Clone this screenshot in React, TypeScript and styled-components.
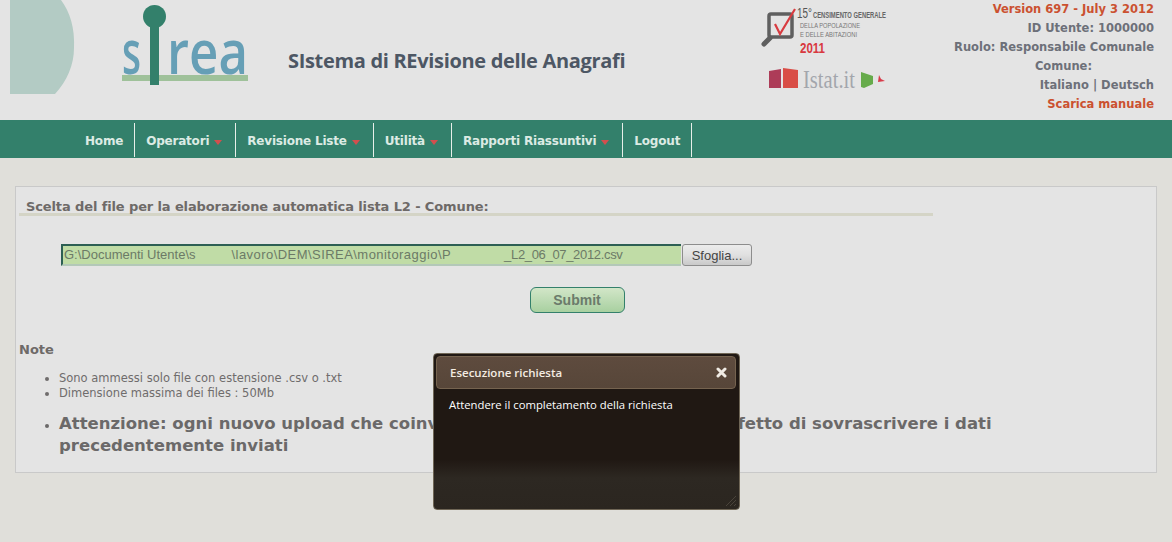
import React from "react"
import styled, { createGlobalStyle } from "styled-components"

const GlobalStyle = createGlobalStyle`
  html, body {
    margin: 0;
    padding: 0;
    background: #e0dfda;
    font-family: "DejaVu Sans", Verdana, sans-serif;
    color: #6b6a6a;
  }
`

const Page = styled.div`
  position: relative;
  width: 1172px;
  height: 542px;
  overflow: hidden;
`

const Header = styled.header`
  display: flex;
  align-items: flex-start;
  height: 120px;
  background: #e4e4e4;
`

const Decor = styled.svg`
  flex: none;
  margin-left: 10px;
`

const Logo = styled.svg`
  flex: none;
  margin-left: 47px;
`

const SiteTitle = styled.h1`
  flex: none;
  width: 337px;
  margin: 47px 0 0 39px;
  font: 700 20px/28px "Open Sans", sans-serif;
  letter-spacing: -0.32px;
  color: #4d5764;
  white-space: nowrap;
`

const Brands = styled.div`
  flex: none;
  display: flex;
  flex-direction: column;
  gap: 12px;
  margin: 6px 0 0 135px;
`

const UserInfo = styled.div`
  margin-left: auto;
  padding: 0 18px 0 0;
  text-align: right;
  font-size: 11.5px;
  font-weight: 700;
  line-height: 19px;
  color: #6d7079;
`

const InfoLine = styled.div<{ $accent?: boolean; $trail?: number }>`
  white-space: nowrap;
  color: ${props => (props.$accent ? "#cb5130" : "inherit")};
  padding-right: ${props => props.$trail || 0}px;
`

const Nav = styled.nav`
  display: flex;
  height: 38px;
  padding: 3px 0 1px 74px;
  box-sizing: border-box;
  background: #33806b;
`

const NavItem = styled.a`
  display: flex;
  align-items: center;
  gap: 5px;
  padding: 2px 11px 0;
  border-right: 1px solid #e8efe9;
  font-size: 12px;
  font-weight: 700;
  letter-spacing: -0.2px;
  color: #dcebe4;
  white-space: nowrap;
`

const Caret = styled.span`
  width: 0;
  height: 0;
  margin: 3px 2px 0 0;
  border-left: 4.5px solid transparent;
  border-right: 4.5px solid transparent;
  border-top: 5px solid #d24f4e;
`

const Panel = styled.main`
  margin: 28px 15px 0;
  height: 287px;
  box-sizing: border-box;
  padding: 9px 3px 0;
  border: 1px solid #c9c9c9;
  background: #e4e4e4;
`

const PanelTitle = styled.h2`
  width: 914px;
  margin: 0;
  padding: 2px 7px 0;
  box-sizing: border-box;
  height: 20px;
  border-bottom: 3px solid #d4d4c6;
  font-size: 13px;
  line-height: 17px;
  font-weight: 700;
  letter-spacing: -0.12px;
  color: #6e6a68;
  white-space: nowrap;
`

const FileRow = styled.div`
  display: flex;
  gap: 1px;
  margin: 28px 0 0 42px;
`

const FileInput = styled.div`
  width: 620px;
  height: 22px;
  box-sizing: border-box;
  padding-left: 1px;
  background: #c0dca6;
  border-top: 2px solid #2d5f54;
  border-left: 2px solid #2d5f54;
  border-bottom: 2px solid #b3c8b8;
  font: 13px/18px "Liberation Sans", Arial, sans-serif;
  color: #6c7a66;
  white-space: pre;
`

const PathPart = styled.span<{ $track?: number }>`
  letter-spacing: ${props => props.$track || 0}px;
`

const Masked = styled.span<{ $w: number }>`
  display: inline-block;
  width: ${props => props.$w}px;
`

const BrowseButton = styled.button`
  width: 70px;
  height: 22px;
  padding: 0;
  border: 1px solid #8d8d8d;
  border-radius: 3px;
  background: linear-gradient(#ececec, #e0e0e0 50%, #c9c9c9);
  font: 13px "Liberation Sans", Arial, sans-serif;
  color: #444;
`

const SubmitRow = styled.div`
  display: flex;
  justify-content: center;
  margin: 21px 0 0 0;
  padding-right: 18px;
`

const SubmitButton = styled.button`
  width: 95px;
  height: 26px;
  padding: 0;
  border: 1px solid #33806b;
  border-radius: 6px;
  background: linear-gradient(#d2e6c8, #a8d0a0);
  font: 700 14px "Liberation Sans", Arial, sans-serif;
  color: #6b7b6b;
`

const NoteTitle = styled.h3`
  margin: 28px 0 0;
  font-size: 13px;
  line-height: 17px;
  font-weight: 700;
  color: #6e6a68;
`

const SmallList = styled.ul`
  margin: 13px 0 0;
  padding: 0 0 0 40px;
  font-size: 11.5px;
  line-height: 15px;
  color: #6f6c6c;
`

const BigList = styled.ul`
  margin: 12px 0 0;
  padding: 0 0 0 40px;
  width: 950px;
  font-size: 16.5px;
  line-height: 22px;
  font-weight: 700;
  color: #6b6969;

  li::marker {
    font-size: 12px;
  }
`

const Modal = styled.section`
  position: absolute;
  left: 433px;
  top: 353px;
  width: 307px;
  height: 157px;
  box-sizing: border-box;
  padding: 2px 3px 2px 2px;
  border: 1px solid #6f6656;
  border-radius: 4px;
  background: linear-gradient(#201813 0, #201813 68%, #2d2822 80%, #2b2620 100%);
  font-family: "Open Sans", sans-serif;
  color: #fff;
`

const ModalBar = styled.div`
  display: flex;
  align-items: center;
  justify-content: space-between;
  height: 33px;
  box-sizing: border-box;
  padding: 0 8px 0 13px;
  border: 1px solid #75634f;
  border-radius: 4px;
  background: linear-gradient(#5e4b3e, #574639);
  font-size: 11.5px;
  font-weight: 600;
  color: #f4ece2;
`

const CloseIcon = styled.svg`
  display: block;
`

const ModalBody = styled.p`
  margin: 8px 0 0 13px;
  font-size: 11.3px;
  line-height: 16px;
`

const Grip = styled.svg`
  position: absolute;
  right: 2px;
  bottom: 2px;
`

const menu = [
  { label: "Home" },
  { label: "Operatori", caret: true },
  { label: "Revisione Liste", caret: true },
  { label: "Utilità", caret: true },
  { label: "Rapporti Riassuntivi", caret: true },
  { label: "Logout" },
]

const App = () => {
  return (
    <Page>
      <GlobalStyle />
      <Header>
        <Decor width="65" height="94" viewBox="0 0 65 94">
          <path
            d="M0 0H51C60 12 65 28 64 48C64 65 57 81 45 94H0Z"
            fill="#b3cbc4"
          />
        </Decor>
        <Logo width="127" height="96" viewBox="0 0 127 96">
          <text x="0" y="74" fontFamily="Open Sans" fontWeight="600" fontSize="62" fill="#669fb6" textLength="19" lengthAdjust="spacingAndGlyphs">
            s
          </text>
          <text x="45" y="74" fontFamily="Open Sans" fontWeight="600" fontSize="62" fill="#669fb6" textLength="81" lengthAdjust="spacingAndGlyphs">
            rea
          </text>
          <rect x="0" y="75" width="126" height="6" fill="#9fc19a" />
          <circle cx="32.5" cy="16.5" r="11.5" fill="#33806b" />
          <rect x="28" y="20" width="9" height="65" fill="#33806b" />
        </Logo>
        <SiteTitle>SIstema di REvisione delle Anagrafi</SiteTitle>
        <Brands>
          <svg width="130" height="50" viewBox="0 0 130 50">
            <rect x="9" y="8" width="23" height="23" rx="2" fill="none" stroke="#5f5f5f" strokeWidth="3.5" />
            <path d="M10 32L4 38" stroke="#5f5f5f" strokeWidth="5" strokeLinecap="round" />
            <path d="M15 18L20 28L35 3" fill="none" stroke="#d83b40" strokeWidth="2.2" />
            <text x="37" y="12" fontFamily="Liberation Sans" fontSize="15" fill="#555" textLength="15" lengthAdjust="spacingAndGlyphs">15°</text>
            <text x="53" y="12" fontFamily="Liberation Sans" fontWeight="700" fontSize="8.5" fill="#666" textLength="73" lengthAdjust="spacingAndGlyphs">CENSIMENTO GENERALE</text>
            <text x="40" y="22" fontFamily="Liberation Sans" fontSize="8" fill="#777" textLength="60" lengthAdjust="spacingAndGlyphs">DELLA POPOLAZIONE</text>
            <text x="40" y="31" fontFamily="Liberation Sans" fontSize="8" fill="#777" textLength="57" lengthAdjust="spacingAndGlyphs">E DELLE ABITAZIONI</text>
            <text x="40" y="47" fontFamily="Liberation Sans" fontWeight="700" fontSize="15" fill="#d8393f" textLength="25" lengthAdjust="spacingAndGlyphs">2011</text>
          </svg>
          <svg width="130" height="26" viewBox="0 0 130 26">
            <path d="M9 3L21 1V20L9 20Z" fill="#ad3c58" />
            <path d="M23 0L38 2V20L23 20Z" fill="#d94d46" />
            <text x="43" y="20" fontFamily="Liberation Serif" fontSize="25" fill="#a3a6ac" textLength="52" lengthAdjust="spacingAndGlyphs">Istat.it</text>
            <path d="M101 4L113 8V16L104 20L101 19Z" fill="#66ab4b" />
            <path d="M119 7L121 11L125 13L118 14Z" fill="#d83b4a" />
          </svg>
        </Brands>
        <UserInfo>
          <InfoLine $accent>Version 697 - July 3 2012</InfoLine>
          <InfoLine>ID Utente: 1000000</InfoLine>
          <InfoLine>Ruolo: Responsabile Comunale</InfoLine>
          <InfoLine $trail={62}>Comune:</InfoLine>
          <InfoLine>Italiano | Deutsch</InfoLine>
          <InfoLine $accent>Scarica manuale</InfoLine>
        </UserInfo>
      </Header>
      <Nav>
        {menu.map(item => (
          <NavItem key={item.label}>
            {item.label}
            {item.caret && <Caret />}
          </NavItem>
        ))}
      </Nav>
      <Panel>
        <PanelTitle>Scelta del file per la elaborazione automatica lista L2 - Comune:</PanelTitle>
        <FileRow>
          <FileInput>
            G:\Documenti Utente\s<Masked $w={36} />
            <PathPart $track={0.45}>\lavoro\DEM\SIREA\monitoraggio\P</PathPart>
            <Masked $w={53} />
            <PathPart $track={-0.33}>_L2_06_07_2012.csv</PathPart>
          </FileInput>
          <BrowseButton>Sfoglia...</BrowseButton>
        </FileRow>
        <SubmitRow>
          <SubmitButton>Submit</SubmitButton>
        </SubmitRow>
        <NoteTitle>Note</NoteTitle>
        <SmallList>
          <li>Sono ammessi solo file con estensione .csv o .txt</li>
          <li>Dimensione massima dei files : 50Mb</li>
        </SmallList>
        <BigList>
          <li>
            Attenzione: ogni nuovo upload che coinvolge il medesimo comune ha l'effetto di sovrascrivere i dati
            precedentemente inviati
          </li>
        </BigList>
      </Panel>
      <Modal>
        <ModalBar>
          Esecuzione richiesta
          <CloseIcon width="11" height="11" viewBox="0 0 11 11">
            <path d="M2 2L9 9M9 2L2 9" stroke="#f0ebe4" strokeWidth="3" strokeLinecap="round" />
          </CloseIcon>
        </ModalBar>
        <ModalBody>Attendere il completamento della richiesta</ModalBody>
        <Grip width="12" height="12" viewBox="0 0 12 12">
          <path d="M1 11L11 1M5 11L11 5M9 11L11 9" stroke="#4a443b" strokeWidth="1" />
        </Grip>
      </Modal>
    </Page>
  )
}

export default App
